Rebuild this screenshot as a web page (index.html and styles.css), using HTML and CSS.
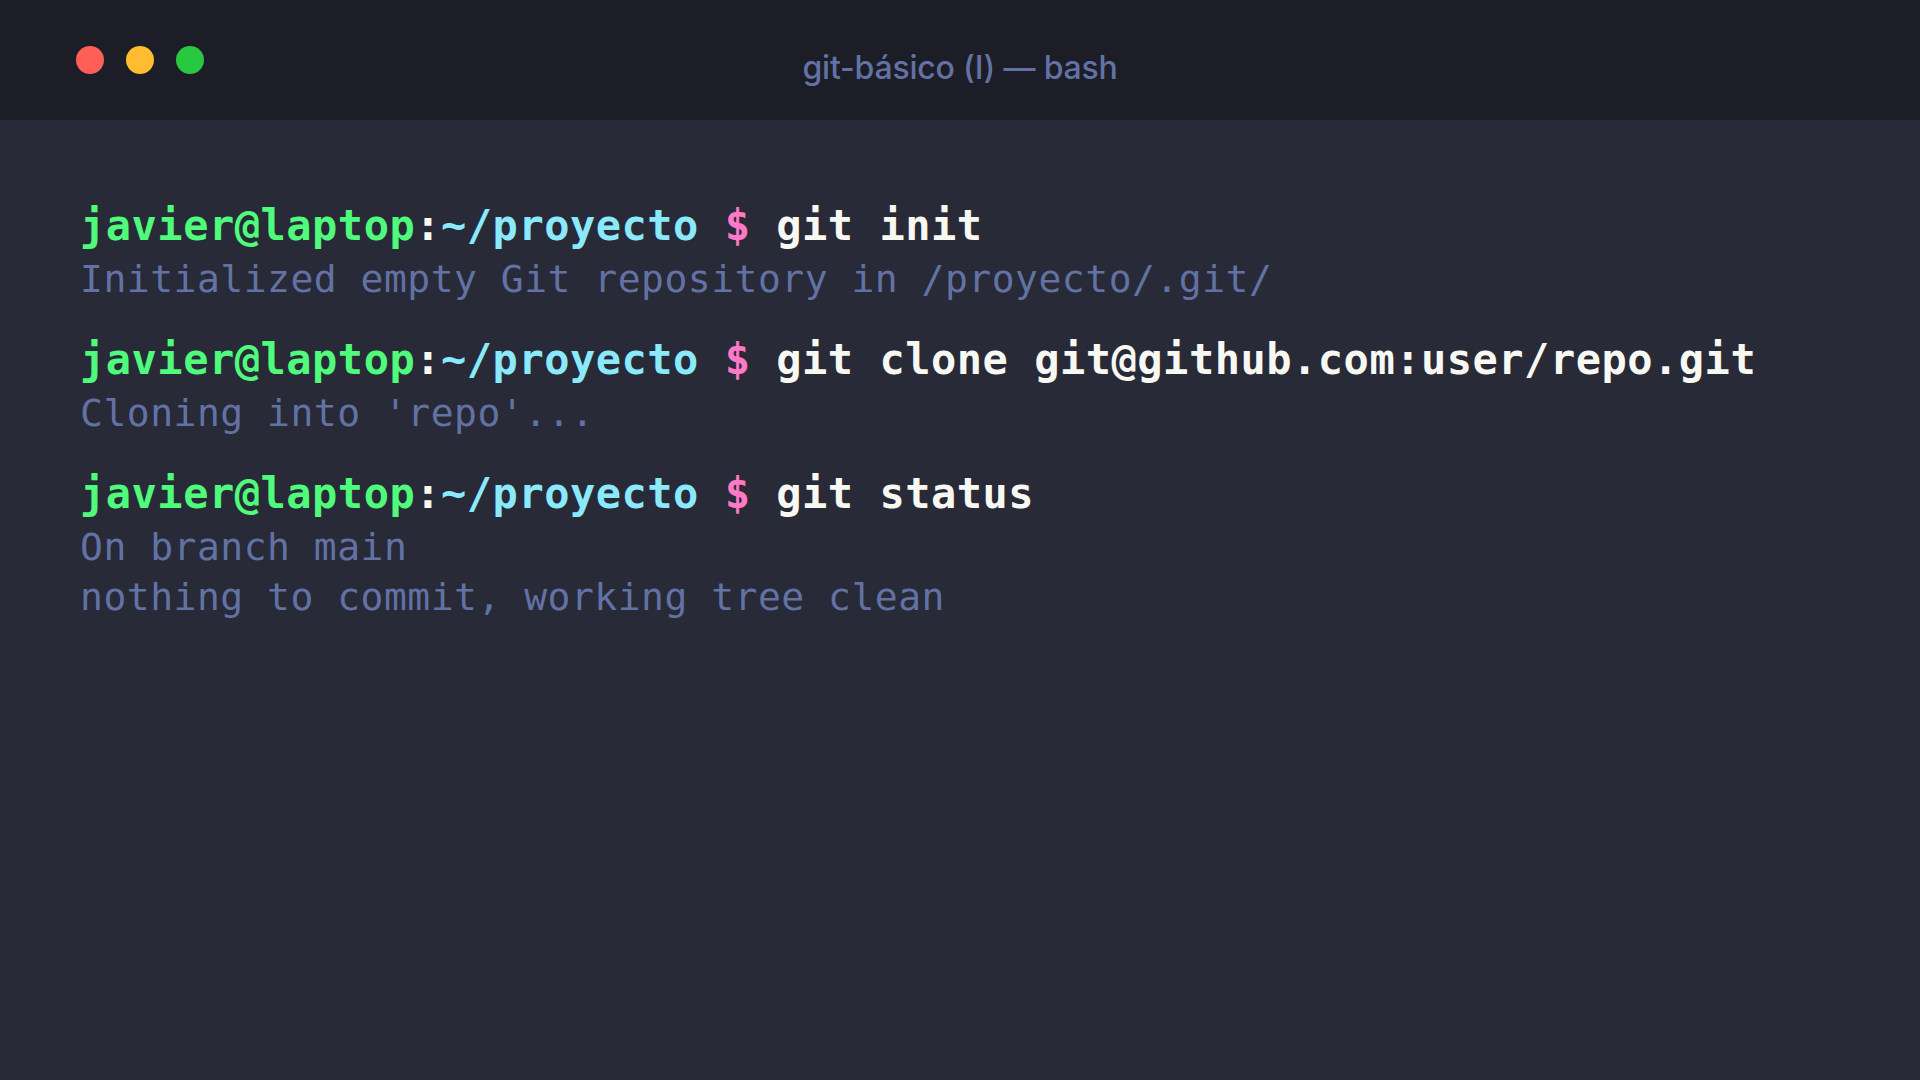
FILE: index.html
```html
<!DOCTYPE html>
<html lang="es">
<head>
<meta charset="utf-8">
<title>git-básico (I) — bash</title>
<link rel="stylesheet" href="styles.css">
</head>
<body>
<div class="window">
  <header class="titlebar">
    <div class="lights">
      <span class="light red"></span>
      <span class="light yellow"></span>
      <span class="light green"></span>
    </div>
    <div class="title">git-básico (I) — bash</div>
    <div class="spacer"></div>
  </header>
  <main class="terminal">
    <section class="block">
      <div class="prompt"><span class="user">javier@laptop</span><span class="colon">:</span><span class="path">~/proyecto</span> <span class="dollar">$</span> <span class="cmd">git init</span></div>
      <div class="out">Initialized empty Git repository in /proyecto/.git/</div>
    </section>
    <section class="block">
      <div class="prompt"><span class="user">javier@laptop</span><span class="colon">:</span><span class="path">~/proyecto</span> <span class="dollar">$</span> <span class="cmd">git clone git@github.com:user/repo.git</span></div>
      <div class="out">Cloning into 'repo'...</div>
    </section>
    <section class="block">
      <div class="prompt"><span class="user">javier@laptop</span><span class="colon">:</span><span class="path">~/proyecto</span> <span class="dollar">$</span> <span class="cmd">git status</span></div>
      <div class="out">On branch main</div>
      <div class="out">nothing to commit, working tree clean</div>
    </section>
  </main>
</div>
</body>
</html>
```

FILE: styles.css
```css
html, body {
  margin: 0;
  padding: 0;
  height: 100%;
  background: #282a37;
}

.window {
  display: flex;
  flex-direction: column;
  height: 100%;
}

.titlebar {
  height: 120px;
  flex: 0 0 120px;
  background: #1c1d26;
  display: grid;
  grid-template-columns: 1fr auto 1fr;
  align-items: center;
}

.lights {
  display: flex;
  gap: 22px;
  padding-left: 76px;
}

.light {
  width: 28px;
  height: 28px;
  border-radius: 50%;
  display: block;
}

.red { background: #ff5f57; }
.yellow { background: #febc2e; }
.green { background: #28c840; }

.title {
  font-family: Inter, "Noto Sans", sans-serif;
  font-weight: 500;
  font-size: 32px;
  color: #6272a4;
  padding-top: 14px;
  letter-spacing: -0.2px;
}

.terminal {
  flex: 1;
  padding: 78px 80px 0 80px;
  font-family: "DejaVu Sans Mono", "Liberation Mono", monospace;
}

.block {
  margin-bottom: 28px;
}

.prompt {
  white-space: pre;
  font-size: 42px;
  line-height: 56px;
  font-weight: bold;
  letter-spacing: 0.5px;
}

.user { color: #50fa7b; }
.colon { color: #f8f8f2; }
.path { color: #8be9fd; }
.dollar { color: #ff79c6; }
.cmd { color: #f8f8f2; }

.out {
  white-space: pre;
  font-size: 38px;
  line-height: 50px;
  letter-spacing: 0.5px;
  color: #6272a4;
}
```
